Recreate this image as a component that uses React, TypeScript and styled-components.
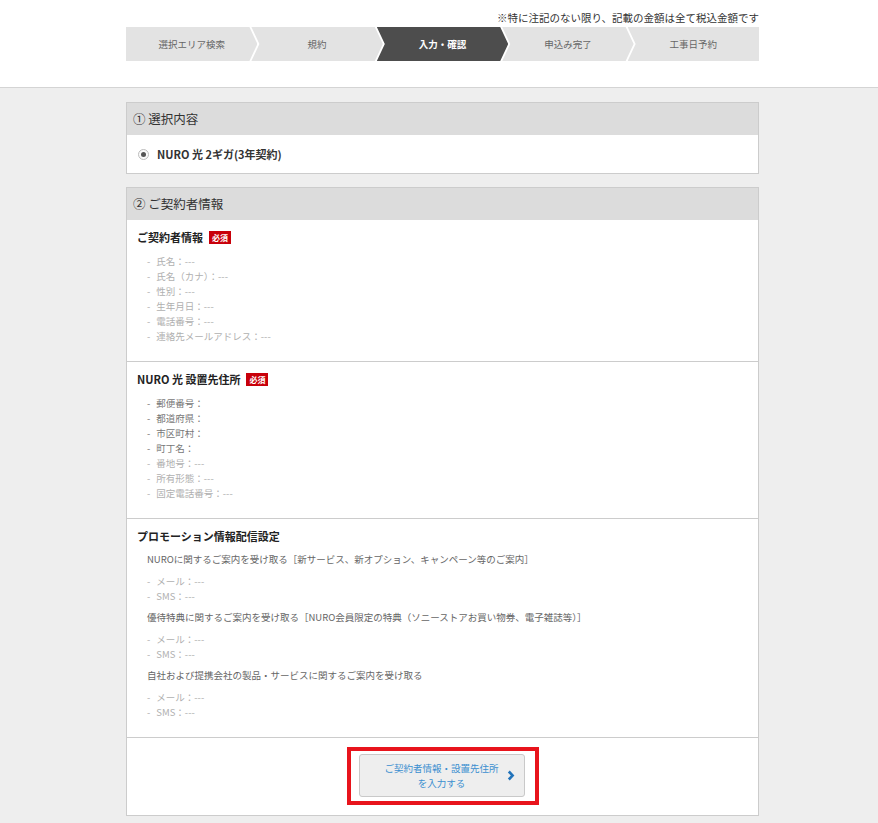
import * as React from 'react';
import styled, { createGlobalStyle } from 'styled-components';

const GlobalStyle = createGlobalStyle`
  html,
  body {
    margin: 0;
    padding: 0;
  }

  body {
    background: #eee;
    color: #333;
    font-family: 'Noto Sans CJK JP', 'Noto Sans', sans-serif;
  }
`;

const Header = styled.header`
  background: #fff;
  border-bottom: 1px solid #d4d4d4;
  padding: 9px 0 26px;
`;

const Inner = styled.div`
  width: 633px;
  margin-left: calc(50% - 313px);
`;

const Note = styled.p`
  margin: 0;
  color: #333;
  font-size: 10.5px;
  line-height: 18px;
  text-align: right;
`;

const Steps = styled.ol`
  display: flex;
  height: 34px;
  margin: 0;
  padding: 0;
  list-style: none;
`;

type StepPos = 'first' | 'middle' | 'last';

const clips: Record<StepPos, string> = {
  first:
    'polygon(0 0, calc(100% - 8px) 0, 100% 50%, calc(100% - 8px) 100%, 0 100%)',
  middle:
    'polygon(0 0, calc(100% - 8px) 0, 100% 50%, calc(100% - 8px) 100%, 0 100%, 8px 50%)',
  last: 'polygon(0 0, 100% 0, 100% 100%, 0 100%, 8px 50%)'
};

const Step = styled.li<{ $active?: boolean; $pos: StepPos }>`
  flex: 1;
  display: flex;
  align-items: center;
  justify-content: center;
  margin-left: ${p => (p.$pos === 'first' ? 0 : -6)}px;
  background: ${p => (p.$active ? '#4d4d4d' : '#e3e3e3')};
  color: ${p => (p.$active ? '#fff' : '#666')};
  font-size: 9.5px;
  font-weight: ${p => (p.$active ? 700 : 400)};
  clip-path: ${p => clips[p.$pos]};
`;

const Main = styled.main`
  padding: 14px 0 8px;
`;

const Section = styled.section`
  background: #fff;
  border: 1px solid #ccc;

  & + & {
    margin-top: 13px;
  }
`;

const SectionHeader = styled.h2`
  margin: 0;
  padding: 0 6px;
  height: 32px;
  background: #dcdcdc;
  color: #333;
  font-size: 12.5px;
  font-weight: 400;
  line-height: 32px;
`;

const Choice = styled.label`
  display: flex;
  align-items: center;
  height: 38px;
  padding-left: 11px;
  font-size: 11px;
  font-weight: 700;
  color: #333;
`;

const Radio = styled.span`
  position: relative;
  width: 11px;
  height: 11px;
  margin-right: 8px;
  box-sizing: border-box;
  border: 1px solid #bdbdbd;
  border-radius: 50%;
  background: #fafafa;

  &::after {
    content: '';
    position: absolute;
    top: 2px;
    left: 2px;
    width: 5px;
    height: 5px;
    border-radius: 50%;
    background: #555;
  }
`;

const Block = styled.div`
  padding: 9px 10px 17px;

  & + & {
    border-top: 1px solid #ccc;
  }
`;

// padding (not margin) below the title so it does not collapse with the list margin
const BlockTitle = styled.h3`
  display: flex;
  align-items: center;
  gap: 6px;
  margin: 0;
  padding-bottom: 2px;
  color: #222;
  font-size: 11px;
  font-weight: 700;
  line-height: 16px;
`;

const Badge = styled.span`
  display: inline-block;
  height: 13px;
  padding: 0 3px;
  background: #c8000a;
  color: #fff;
  font-size: 8px;
  font-weight: 700;
  line-height: 13px;
`;

const List = styled.ul`
  margin: 7px 0 0;
  padding: 0 0 0 10px;
  list-style: none;
`;

const Item = styled.li<{ $strong?: boolean }>`
  color: ${p => (p.$strong ? '#777' : '#b0b0b0')};
  font-size: 9.5px;
  line-height: 15px;

  &::before {
    content: '-';
    margin-right: 6px;
  }
`;

const Desc = styled.p`
  margin: 6px 0 0;
  padding-left: 10px;
  color: #666;
  font-size: 9.5px;
  line-height: 15px;
`;

const ButtonArea = styled.div`
  display: flex;
  justify-content: center;
  padding: 9px 0 10px;
  border-top: 1px solid #ccc;
`;

const Highlight = styled.div`
  padding: 3px 10px 4px 8px;
  border: 4px solid #e8141c;
`;

const Button = styled.button`
  display: flex;
  align-items: center;
  box-sizing: border-box;
  width: 166px;
  height: 43px;
  padding: 0 9px 0 17px;
  border: 1px solid #c9c9c9;
  border-radius: 3px;
  background: #eee;
  color: #3b8fd0;
  font-family: inherit;
  font-size: 9.5px;
  line-height: 15px;
  cursor: pointer;
`;

const ButtonText = styled.span`
  flex: 1;
  text-align: center;
`;

const steps = ['選択エリア検索', '規約', '入力・確認', '申込み完了', '工事日予約'];

const contractItems = [
  '氏名：---',
  '氏名（カナ）：---',
  '性別：---',
  '生年月日：---',
  '電話番号：---',
  '連絡先メールアドレス：---'
];

const addressItems = [
  { label: '郵便番号：', strong: true },
  { label: '都道府県：', strong: true },
  { label: '市区町村：', strong: true },
  { label: '町丁名：', strong: true },
  { label: '番地号：---' },
  { label: '所有形態：---' },
  { label: '固定電話番号：---' }
];

const promotions = [
  'NUROに関するご案内を受け取る［新サービス、新オプション、キャンペーン等のご案内］',
  '優待特典に関するご案内を受け取る［NURO会員限定の特典（ソニーストアお買い物券、電子雑誌等）］',
  '自社および提携会社の製品・サービスに関するご案内を受け取る'
];

const Chevron = () => (
  <svg width="8" height="11" viewBox="0 0 8 11">
    <path
      d="M1.8 1.5 L5.6 5.5 L1.8 9.5"
      fill="none"
      stroke="#2273ba"
      strokeWidth="2.6"
    />
  </svg>
);

const App = () => (
  <React.Fragment>
    <GlobalStyle />
    <Header>
      <Inner>
        <Note>※特に注記のない限り、記載の金額は全て税込金額です</Note>
        <Steps>
          {steps.map((step, index) => (
            <Step
              $active={index === 2}
              $pos={index === 0 ? 'first' : index === steps.length - 1 ? 'last' : 'middle'}
              key={step}
            >
              {step}
            </Step>
          ))}
        </Steps>
      </Inner>
    </Header>
    <Main>
      <Inner>
        <Section>
          <SectionHeader>① 選択内容</SectionHeader>
          <Choice>
            <Radio />
            NURO 光 2ギガ(3年契約)
          </Choice>
        </Section>
        <Section>
          <SectionHeader>② ご契約者情報</SectionHeader>
          <Block>
            <BlockTitle>
              ご契約者情報<Badge>必須</Badge>
            </BlockTitle>
            <List>
              {contractItems.map(item => (
                <Item key={item}>{item}</Item>
              ))}
            </List>
          </Block>
          <Block>
            <BlockTitle>
              NURO 光 設置先住所<Badge>必須</Badge>
            </BlockTitle>
            <List>
              {addressItems.map(({ label, strong }) => (
                <Item $strong={strong} key={label}>
                  {label}
                </Item>
              ))}
            </List>
          </Block>
          <Block>
            <BlockTitle>プロモーション情報配信設定</BlockTitle>
            {promotions.map(text => (
              <React.Fragment key={text}>
                <Desc>{text}</Desc>
                <List>
                  <Item>メール：---</Item>
                  <Item>SMS：---</Item>
                </List>
              </React.Fragment>
            ))}
          </Block>
          <ButtonArea>
            <Highlight>
              <Button type="button">
                <ButtonText>
                  ご契約者情報・設置先住所
                  <br />
                  を入力する
                </ButtonText>
                <Chevron />
              </Button>
            </Highlight>
          </ButtonArea>
        </Section>
      </Inner>
    </Main>
  </React.Fragment>
);

export default App;
